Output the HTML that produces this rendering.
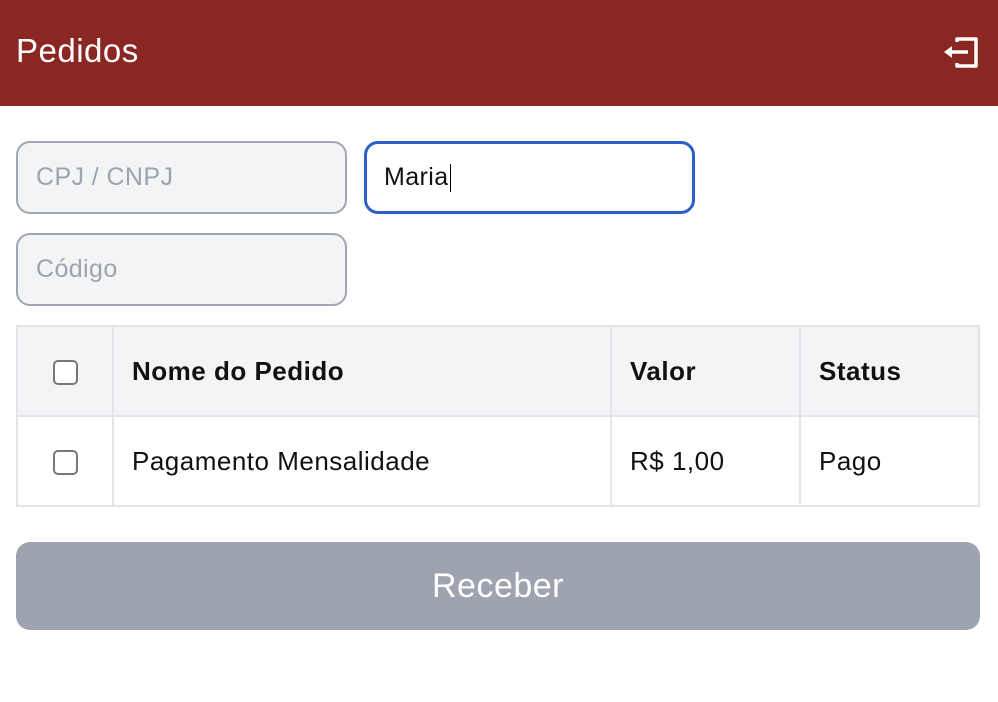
<!DOCTYPE html>
<html><head><meta charset="utf-8"><style>
*{box-sizing:border-box;margin:0;padding:0}
body{width:998px;height:702px;background:#fff;font-family:"Liberation Sans",sans-serif;position:relative;overflow:hidden}
.hdr{position:absolute;left:0;top:0;width:998px;height:106px;background:#8b2723;color:#fff}
.hdr h1{position:absolute;left:16px;top:32px;font-size:33px;font-weight:normal;letter-spacing:0.5px}
.in{position:absolute;width:331px;height:73px;border:2px solid #a1a6b0;border-radius:14px;background:#f3f4f6;font-size:25px;letter-spacing:0.4px;color:#9ca3af;padding-left:18px;line-height:69px}
.focus{border:3px solid #2d5fc6;background:#fff;color:#111;padding-left:17px;line-height:67px}
table{position:absolute;left:16px;top:325px;width:964px;border-collapse:collapse;font-size:26px;letter-spacing:0.5px;color:#111}
td,th{border:2px solid #e4e5e8;height:90px;text-align:left;padding-left:18px}
th{background:#f3f4f6;font-weight:bold}
.cb{display:inline-block;width:25px;height:25px;border:2px solid #777;border-radius:5px;background:#fff;vertical-align:middle}
.btn{position:absolute;left:16px;top:542px;width:964px;height:88px;background:#9ea4af;border-radius:14px;color:#fff;font-size:34px;letter-spacing:0.5px;text-align:center;line-height:88px}
</style></head><body>
<div class="hdr"><h1>Pedidos</h1>
<svg style="position:absolute;left:940px;top:34px" width="42" height="36" viewBox="0 0 42 36"><path d="M17 8V5h19v27H17v-3" fill="none" stroke="#fff" stroke-width="3.5" stroke-linejoin="round"/><path d="M28 18H9" stroke="#fff" stroke-width="3.5"/><path d="M4 18l8-6v12z" fill="#fff"/></svg>
</div>
<div class="in" style="left:16px;top:141px">CPJ / CNPJ</div>
<div class="in focus" style="left:364px;top:141px">Maria<span style="display:inline-block;width:1px;height:28px;background:#000;vertical-align:middle;margin-left:1px"></span></div>
<div class="in" style="left:16px;top:233px">Código</div>
<table>
<tr><th style="width:96px;text-align:center;padding:0"><span class="cb"></span></th><th style="width:498px">Nome do Pedido</th><th style="width:189px">Valor</th><th>Status</th></tr>
<tr><td style="text-align:center;padding:0"><span class="cb"></span></td><td>Pagamento Mensalidade</td><td>R$ 1,00</td><td>Pago</td></tr>
</table>
<div class="btn">Receber</div>
</body></html>
